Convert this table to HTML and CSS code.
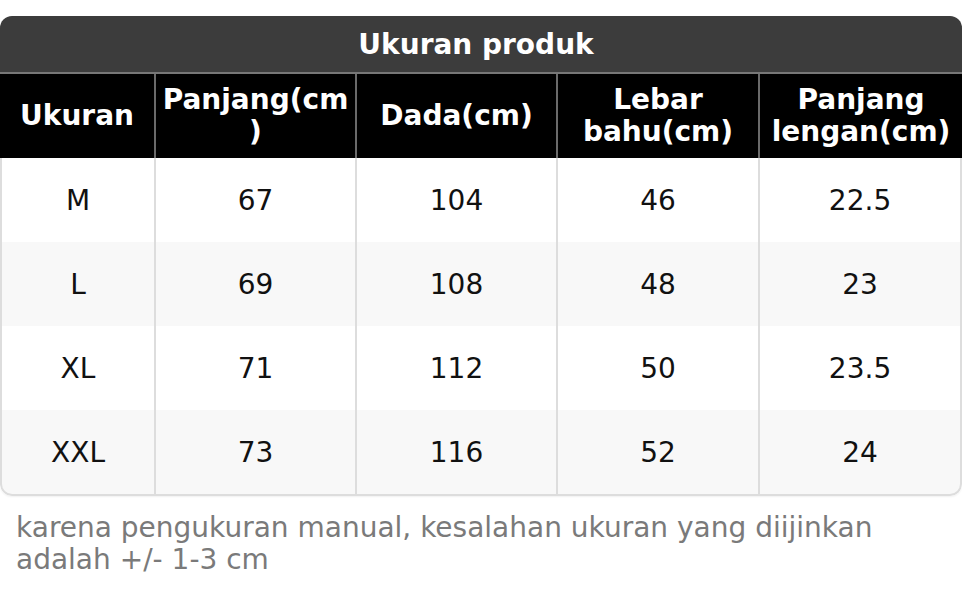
FILE: index.html
```html
<!DOCTYPE html>
<html lang="id">
<head>
<meta charset="utf-8">
<title>Ukuran produk</title>
<link rel="stylesheet" href="styles.css">
</head>
<body>
<div class="size-card">
  <table class="size-table">
    <colgroup>
      <col class="c1"><col class="c2"><col class="c3"><col class="c4"><col class="c5">
    </colgroup>
    <thead>
      <tr><th class="title" colspan="5">Ukuran produk</th></tr>
      <tr class="head">
        <th>Ukuran</th>
        <th>Panjang(cm)</th>
        <th>Dada(cm)</th>
        <th>Lebar bahu(cm)</th>
        <th>Panjang lengan(cm)</th>
      </tr>
    </thead>
    <tbody>
      <tr><td>M</td><td>67</td><td>104</td><td>46</td><td>22.5</td></tr>
      <tr><td>L</td><td>69</td><td>108</td><td>48</td><td>23</td></tr>
      <tr><td>XL</td><td>71</td><td>112</td><td>50</td><td>23.5</td></tr>
      <tr><td>XXL</td><td>73</td><td>116</td><td>52</td><td>24</td></tr>
    </tbody>
  </table>
</div>
<p class="note">karena pengukuran manual, kesalahan ukuran yang diijinkan adalah +/- 1-3 cm</p>
</body>
</html>
```

FILE: styles.css
```css
html, body {
  margin: 0;
  padding: 0;
  background: #ffffff;
}

body {
  font-family: "DejaVu Sans", Verdana, sans-serif;
  font-size: 28px;
  color: #111111;
}

.size-card {
  margin-top: 16px;
  border-radius: 12px;
  overflow: hidden;
  box-shadow: 0 1px 2px rgba(0, 0, 0, 0.06);
}

.size-table {
  width: 100%;
  table-layout: fixed;
  border-collapse: separate;
  border-spacing: 0;
}

.c1 { width: 156px; }
.c2 { width: 201px; }
.c3 { width: 201px; }
.c4 { width: 202px; }
.c5 { width: 202px; }

.title {
  height: 58px;
  padding: 0 10px 0 0;
  box-sizing: border-box;
  background: #3c3c3c;
  color: #ffffff;
  font-weight: bold;
  text-align: center;
  border-bottom: 2px solid #777777;
}

.head th {
  height: 84px;
  box-sizing: border-box;
  padding: 0 4px;
  background: #000000;
  color: #ffffff;
  font-weight: bold;
  text-align: center;
  vertical-align: middle;
  line-height: 32px;
  overflow-wrap: anywhere;
  border-right: 2px solid #6a6a6a;
}

.head th:last-child {
  border-right: none;
}

td {
  height: 84px;
  box-sizing: border-box;
  padding: 0 4px;
  text-align: center;
  vertical-align: middle;
  border-right: 2px solid #dddddd;
}

td:first-child {
  border-left: 2px solid #dddddd;
}

tbody tr:nth-child(even) td {
  background: #f8f8f8;
}

tbody tr:last-child td {
  height: 86px;
  border-bottom: 2px solid #dddddd;
}

tbody tr:last-child td:first-child {
  border-bottom-left-radius: 12px;
}

tbody tr:last-child td:last-child {
  border-bottom-right-radius: 12px;
}

.note {
  margin: 16px 0 0;
  padding: 0 16px;
  color: #7a7a7a;
  line-height: 32px;
}
```
